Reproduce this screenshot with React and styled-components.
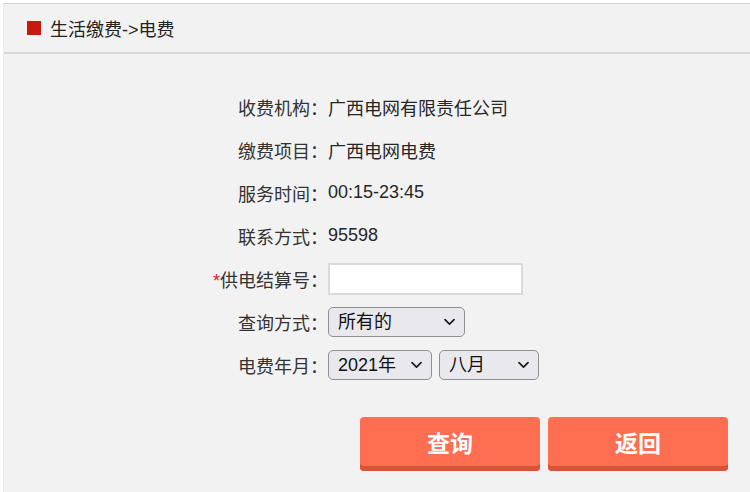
import React, { useState } from "react";
import styled, { createGlobalStyle } from "styled-components";

const GlobalStyle = createGlobalStyle`
	html, body {
		margin: 0;
		padding: 0;
		background: #ffffff;
	}

	body {
		font-family: "Liberation Sans", "Noto Sans CJK SC", sans-serif;
		color: #333333;
	}
`;

const Chevron = () => (
	<svg width='11' height='7' viewBox='0 0 11 7' fill='none'>
		<path
			d='M1 1.2 L5.5 5.6 L10 1.2'
			stroke='#1c1c1c'
			strokeWidth='1.7'
			strokeLinecap='round'
			strokeLinejoin='round'
		/>
	</svg>
);

const Dropdown = ({ width, value, onChange, options }) => (
	<SelectWrap $width={width}>
		<Select value={value} onChange={(e) => onChange(e.target.value)}>
			{options.map((opt) => (
				<option key={opt} value={opt}>
					{opt}
				</option>
			))}
		</Select>
		<ChevronSlot>
			<Chevron />
		</ChevronSlot>
	</SelectWrap>
);

const infoRows = [
	{ label: "收费机构：", value: "广西电网有限责任公司" },
	{ label: "缴费项目：", value: "广西电网电费" },
	{ label: "服务时间：", value: "00:15-23:45" },
	{ label: "联系方式：", value: "95598" },
];

const months = ["一月", "二月", "三月", "四月", "五月", "六月", "七月", "八月", "九月", "十月", "十一月", "十二月"];

const App = () => {
	const [account, setAccount] = useState("");
	const [mode, setMode] = useState("所有的");
	const [year, setYear] = useState("2021年");
	const [month, setMonth] = useState("八月");

	return (
		<>
			<GlobalStyle />
			<Panel>
				<Header>
					<Marker />
					<HeaderTitle>生活缴费-&gt;电费</HeaderTitle>
				</Header>

				<Form>
					{infoRows.map((row) => (
						<Row key={row.label}>
							<Label>{row.label}</Label>
							<Value>{row.value}</Value>
						</Row>
					))}

					<Row>
						<Label>
							<Required>*</Required>供电结算号：
						</Label>
						<TextInput value={account} onChange={(e) => setAccount(e.target.value)} />
					</Row>

					<Row>
						<Label>查询方式：</Label>
						<Dropdown width={137} value={mode} onChange={setMode} options={["所有的", "已缴费", "未缴费"]} />
					</Row>

					<Row>
						<Label>电费年月：</Label>
						<Controls>
							<Dropdown width={104} value={year} onChange={setYear} options={["2019年", "2020年", "2021年"]} />
							<Dropdown width={100} value={month} onChange={setMonth} options={months} />
						</Controls>
					</Row>
				</Form>

				<Actions>
					<ActionButton>查询</ActionButton>
					<ActionButton>返回</ActionButton>
				</Actions>
			</Panel>
		</>
	);
};

export default App;

// Styled Components
const Panel = styled.div`
	margin: 3px 0 0 3px;
	min-height: 489px;
	box-sizing: border-box;
	background: #f2f2f2;
	border-top: 1px solid #d2d2d2;
	border-left: 1px solid #ebebeb;
`;

const Header = styled.div`
	display: flex;
	align-items: center;
	gap: 9px;
	height: 48px;
	padding-left: 23px;
	border-bottom: 2px solid #d8d8d8;
`;

const Marker = styled.span`
	width: 14px;
	height: 14px;
	background: #c8190e;
	margin-top: -1px;
`;

const HeaderTitle = styled.span`
	font-size: 18px;
	color: #222222;
`;

const Form = styled.div`
	display: flex;
	flex-direction: column;
	padding: 31px 0 0 194px;
`;

const Row = styled.div`
	display: flex;
	align-items: center;
	height: 43px;
	font-size: 18px;
`;

const Label = styled.div`
	width: 130px;
	text-align: right;
	color: #333333;
	white-space: nowrap;
`;

const Required = styled.span`
	color: #e0241b;
`;

const Value = styled.div`
	color: #262626;
`;

const TextInput = styled.input`
	width: 195px;
	height: 32px;
	box-sizing: border-box;
	border: 2px solid #dadada;
	background: #ffffff;
	outline: none;
	padding: 0 6px;
	font: inherit;
`;

const Controls = styled.div`
	display: flex;
	gap: 7px;
`;

const SelectWrap = styled.div`
	position: relative;
	width: ${(p) => p.$width}px;
	height: 30px;
`;

const Select = styled.select`
	appearance: none;
	width: 100%;
	height: 100%;
	box-sizing: border-box;
	margin: 0;
	padding: 0 24px 0 9px;
	border: 1px solid #8e8e93;
	border-radius: 5px;
	background: #e9e9ed;
	color: #111111;
	font: inherit;
	font-size: 18px;
	outline: none;
`;

const ChevronSlot = styled.span`
	position: absolute;
	right: 10px;
	top: 50%;
	transform: translateY(-50%);
	display: flex;
	pointer-events: none;
`;

const Actions = styled.div`
	display: flex;
	justify-content: flex-end;
	gap: 8px;
	padding: 31px 22px 0 0;
`;

const ActionButton = styled.button`
	width: 180px;
	height: 54px;
	box-sizing: border-box;
	border: none;
	border-radius: 4px;
	background: #fe6e51;
	box-shadow: inset 0 -5px 0 #dc5236;
	padding: 0 0 4px;
	color: #ffffff;
	font-family: "Liberation Sans", "Noto Sans CJK SC", sans-serif;
	font-size: 23px;
	font-weight: bold;
	cursor: pointer;
`;
